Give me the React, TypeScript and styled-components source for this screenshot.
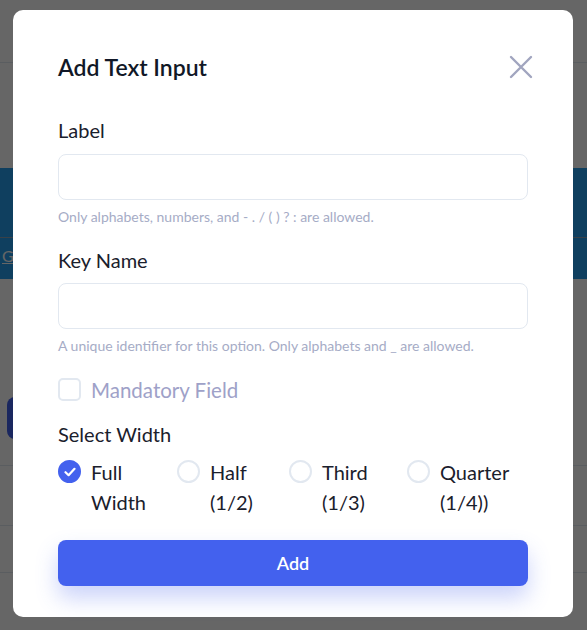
import styled, { createGlobalStyle } from 'styled-components';

const GlobalStyle = createGlobalStyle`
  * {
    box-sizing: border-box;
  }
  body {
    margin: 0;
    font-family: Lato, 'Open Sans', sans-serif;
    color: #1a202c;
    background: #ffffff;
  }
`;

const Page = styled.div`
  position: relative;
  width: 587px;
  height: 630px;
  overflow: hidden;
  background: #ffffff;
`;

const PageRule = styled.div<{ top: number }>`
  height: 1px;
  margin-top: ${(props) => props.top}px;
  background: #e2e8f0;
`;

const Banner = styled.div`
  margin-top: 105px;
  height: 111px;
  background: #269eed;
  display: flex;
  flex-direction: column;
`;

const BannerTop = styled.div`
  height: 70px;
  border-bottom: 1px solid #8ea3b3;
`;

const BannerLink = styled.span`
  padding: 8px 0 0 2px;
  font-size: 16px;
  color: #ffffff;
  text-decoration: underline;
`;

const GhostButton = styled.div`
  margin: 118px 0 0 7px;
  width: 120px;
  height: 42px;
  border-radius: 8px;
  background: #4361ee;
`;

const Overlay = styled.div`
  position: absolute;
  inset: 0;
  background: rgba(0, 0, 0, 0.6);
  display: flex;
  align-items: flex-start;
  padding: 10px 14px 0 13px;
`;

const Modal = styled.div`
  width: 560px;
  height: 607px;
  background: #ffffff;
  border-radius: 10px;
  padding: 42px 45px 31px;
  display: flex;
  flex-direction: column;
`;

const Header = styled.div`
  display: flex;
  align-items: center;
  justify-content: space-between;
  height: 30px;
`;

const Title = styled.h2`
  margin: 0;
  font-size: 23px;
  font-weight: 600;
  line-height: 30px;
  color: #111827;
`;

const CloseButton = styled.button`
  border: none;
  background: none;
  padding: 0;
  margin-right: -5px;
  width: 24px;
  height: 24px;
  display: flex;
  cursor: pointer;
`;

const FieldLabel = styled.div<{ top: number }>`
  margin-top: ${(props) => props.top}px;
  font-size: 20px;
  line-height: 26px;
  color: #1a202c;
`;

const TextInput = styled.input<{ top: number }>`
  margin-top: ${(props) => props.top}px;
  width: 100%;
  height: 46px;
  border: 1px solid #e2e8f0;
  border-radius: 8px;
  padding: 0 14px;
  font-family: inherit;
  font-size: 16px;
  outline: none;
`;

const Help = styled.div`
  margin-top: 7px;
  font-size: 14px;
  line-height: 20px;
  color: #a6acc6;
`;

const CheckRow = styled.label`
  margin-top: 22px;
  display: flex;
  align-items: center;
  gap: 10px;
  height: 23px;
`;

const CheckBox = styled.span`
  width: 23px;
  height: 23px;
  border: 2px solid #e2e8f0;
  border-radius: 5px;
`;

const CheckText = styled.span`
  font-size: 20.5px;
  color: #9ea1c8;
`;

const RadioGrid = styled.div`
  margin-top: 10px;
  display: grid;
  grid-template-columns: 119px 112px 118px 1fr;
`;

const RadioItem = styled.label`
  display: flex;
  align-items: flex-start;
  gap: 10px;
`;

const RadioDot = styled.span<{ checked?: boolean }>`
  flex: none;
  margin-top: 3px;
  width: 23px;
  height: 23px;
  border-radius: 50%;
  border: 2px solid ${(props) => (props.checked ? '#4361ee' : '#e2e8f0')};
  background: ${(props) => (props.checked ? '#4361ee' : '#ffffff')};
  display: flex;
  align-items: center;
  justify-content: center;
`;

const RadioText = styled.span`
  font-size: 20px;
  line-height: 30px;
  color: #1a202c;
`;

const AddButton = styled.button`
  margin-top: 23px;
  width: 100%;
  height: 46px;
  border: none;
  border-radius: 8px;
  background: #4361ee;
  color: #ffffff;
  font-family: inherit;
  font-size: 18px;
  font-weight: 600;
  box-shadow: 0 12px 22px rgba(67, 97, 238, 0.28);
  cursor: pointer;
`;

const widths = [
  { label: 'Full Width', checked: true },
  { label: 'Half (1/2)' },
  { label: 'Third (1/3)' },
  { label: 'Quarter (1/4))' },
];

const App = () => {
  return (
    <>
      <GlobalStyle />
      <Page>
        <PageRule top={62} />
        <Banner>
          <BannerTop />
          <BannerLink>Gr</BannerLink>
        </Banner>
        <GhostButton />
        <PageRule top={26} />
        <PageRule top={59} />
        <PageRule top={46} />
        <Overlay>
          <Modal>
            <Header>
              <Title>Add Text Input</Title>
              <CloseButton aria-label='Close'>
                <svg width='24' height='24' viewBox='0 0 24 24' fill='none'>
                  <path
                    d='M2 2L22 22M22 2L2 22'
                    stroke='#a1a5bf'
                    strokeWidth='2.4'
                    strokeLinecap='round'
                  />
                </svg>
              </CloseButton>
            </Header>
            <FieldLabel top={35}>Label</FieldLabel>
            <TextInput top={11} />
            <Help>Only alphabets, numbers, and - . / ( ) ? : are allowed.</Help>
            <FieldLabel top={20}>Key Name</FieldLabel>
            <TextInput top={10} />
            <Help>
              A unique identifier for this option. Only alphabets and _ are
              allowed.
            </Help>
            <CheckRow>
              <CheckBox />
              <CheckText>Mandatory Field</CheckText>
            </CheckRow>
            <FieldLabel top={20}>Select Width</FieldLabel>
            <RadioGrid>
              {widths.map((w) => (
                <RadioItem key={w.label}>
                  <RadioDot checked={w.checked}>
                    {w.checked && (
                      <svg width='12' height='10' viewBox='0 0 12 10' fill='none'>
                        <path
                          d='M1.5 5.2L4.6 8.2L10.5 1.8'
                          stroke='#ffffff'
                          strokeWidth='2.2'
                          strokeLinecap='round'
                          strokeLinejoin='round'
                        />
                      </svg>
                    )}
                  </RadioDot>
                  <RadioText>{w.label}</RadioText>
                </RadioItem>
              ))}
            </RadioGrid>
            <AddButton>Add</AddButton>
          </Modal>
        </Overlay>
      </Page>
    </>
  );
};

export default App;
